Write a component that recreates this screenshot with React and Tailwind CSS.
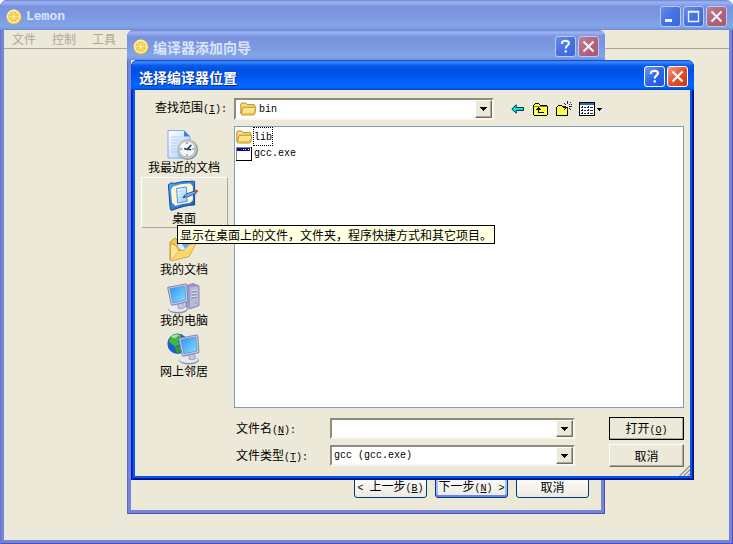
import React from 'react';

const places = [
  { name: '我最近的文档', Icon: RecentIcon },
  { name: '桌面', Icon: DesktopIcon, hot: true },
  { name: '我的文档', Icon: DocumentsIcon },
  { name: '我的电脑', Icon: ComputerIcon },
  { name: '网上邻居', Icon: NetworkIcon },
];

function Latin({ children }) {
  return <span className="font-['Liberation_Mono','Noto_Sans_CJK_SC',monospace] text-[10px]">{children}</span>;
}

function Key({ letter, colon }) {
  return (
    <Latin>
      (<u>{letter}</u>){colon ? ':' : ''}
    </Latin>
  );
}

function LemonIcon() {
  return (
    <svg width="16" height="16" viewBox="0 0 16 16" aria-hidden="true" className="shrink-0">
      <circle cx="8" cy="8" r="7.6" fill="#e3ae2c" />
      <circle cx="7.7" cy="7.6" r="7" fill="#fdf3c0" />
      <circle cx="7.7" cy="7.6" r="5.6" fill="#f2cc4c" />
      <path d="M7.7 2.4v10.4M2.5 7.6h10.4M4 3.9l7.4 7.4M11.4 3.9L4 11.3" stroke="#fbe79a" strokeWidth="0.8" />
      <circle cx="7.7" cy="7.6" r="1" fill="#fff8d8" />
    </svg>
  );
}

function CaptionButton({ kind, active }) {
  const blue = active
    ? 'bg-linear-to-br from-[#6f9bf5] via-[#2f66e8] to-[#1f56dc] border-white'
    : 'bg-linear-to-br from-[#6a8cea] via-[#4471e4] to-[#3d68dc] border-[#b9c9f3]';
  const red = active
    ? 'bg-linear-to-br from-[#f09a80] via-[#e4522a] to-[#c93a12] border-white'
    : 'bg-linear-to-br from-[#bd8096] via-[#b5647a] to-[#a95570] border-[#b9c9f3]';
  const labels = { min: 'Minimize', max: 'Maximize', help: 'Help', close: 'Close' };
  return (
    <button
      type="button"
      aria-label={labels[kind]}
      className={`grid size-[21px] place-items-center rounded-[3px] border ${kind === 'close' ? red : blue}`}
    >
      <svg width="19" height="19" viewBox="0 0 19 19" fill="none" stroke={active ? '#fff' : '#eef2fd'} strokeWidth="2">
        {kind === 'min' && <path d="M4 13.5h7" strokeWidth="3" />}
        {kind === 'max' && <path d="M4.5 4.5h10v10h-10zM4 5h11" strokeWidth="1.4" />}
        {kind === 'close' && <path d="M4.5 4.5l10 10M14.5 4.5l-10 10" strokeWidth="2.2" />}
        {kind === 'help' && (
          <path d="M6 7V6c0-1.5 1.2-2.2 3.4-2.2S13 4.7 13 6.2c0 2.2-3.3 2.4-3.3 5.3M9.7 13.2v2.3" strokeWidth="2.2" />
        )}
      </svg>
    </button>
  );
}

function TitleBar({ title, icon, active, buttons, latin }) {
  return (
    <header
      className={`flex h-[30px] shrink-0 items-center gap-[2px] rounded-t-[7px] pr-[6px] pt-[3px] ${
        icon ? 'pl-[6px]' : 'pl-[8px]'
      } ${
        active
          ? 'bg-[linear-gradient(#0831d9_0%,#3c8cf8_6%,#2a80f6_10%,#0a5ce8_18%,#0050e2_30%,#0056ee_55%,#0066ff_80%,#0062f8_92%,#0048d4_100%)]'
          : 'bg-[linear-gradient(#6f84d8_0%,#9cb6f0_7%,#8fa8ec_13%,#7a93e0_22%,#7b97e1_50%,#82a5e6_85%,#7f9fe3_93%,#7088d6_100%)]'
      }`}
    >
      {icon && <LemonIcon />}
      <h1
        className={`min-w-0 flex-1 truncate font-bold leading-5 ${icon ? 'pl-[2px]' : ''} ${
          latin ? "font-['Liberation_Mono',monospace] text-[13px]" : 'text-sm'
        } ${active ? 'text-white [text-shadow:1px_1px_#0a2a8c]' : 'text-[#dbe4fa]'}`}
      >
        {title}
      </h1>
      {buttons.map((kind) => (
        <CaptionButton key={kind} kind={kind} active={active} />
      ))}
    </header>
  );
}

const sunken = 'border-2 border-t-[#8f8c7f] border-l-[#8f8c7f] border-b-[#f8f7f1] border-r-[#f8f7f1] bg-white';
const raised =
  'border border-t-white border-l-white border-b-[#716f64] border-r-[#716f64] bg-[#ece9d8] shadow-[inset_-1px_-1px_#aca899]';

function Arrow() {
  return (
    <svg width="7" height="4" viewBox="0 0 7 4" shapeRendering="crispEdges" aria-hidden="true">
      <path d="M0 0h7v1H0zM1 1h5v1H1zM2 2h3v1H2zM3 3h1v1H3z" fill="#000" />
    </svg>
  );
}

function DropSelect({ id, value, icon, className }) {
  return (
    <div className={`grid grid-cols-[minmax(0,1fr)] ${sunken} ${className}`}>
      <div className="col-start-1 row-start-1 flex items-center">
        {icon}
        <select
          id={id}
          defaultValue={value}
          className="h-full w-full flex-1 appearance-none bg-transparent pl-[2px] pt-[1px] font-['Liberation_Mono',monospace] text-[10px] text-black outline-none"
        >
          <option>{value}</option>
        </select>
      </div>
      <span className={`pointer-events-none col-start-1 row-start-1 grid w-[17px] place-items-center justify-self-end ${raised}`}>
        <Arrow />
      </span>
    </div>
  );
}

function FolderIcon({ className }) {
  return (
    <svg width="17" height="16" viewBox="0 0 17 16" aria-hidden="true" className={`shrink-0 ${className || ''}`}>
      <path d="M.8 12.5V3.2q0-1 1-1.2h4l1.4 1.6h6.6q1 0 1 1v8z" fill="#f8dc7c" stroke="#b98a1c" />
      <path d="M1.4 13.6q.8-6 2-7.4h11.8q.8 0 .6 1l-1.2 5.6q-.4 1.2-1.4 1.2H2z" fill="#fbe690" stroke="#bd8d20" />
      <path d="M3 12.6h10.6l1.2-4" fill="none" stroke="#edbc40" strokeWidth="1.2" />
    </svg>
  );
}

function AppIcon() {
  return (
    <svg width="16" height="14" viewBox="0 0 16 14" shapeRendering="crispEdges" aria-hidden="true" className="shrink-0">
      <path d="M0 0h16v14H0z" fill="#000" />
      <path d="M0 0h15v13H0z" fill="#8a8a8a" />
      <path d="M1 1h14v12H1z" fill="#fff" />
      <path d="M1 1h13v3H1z" fill="#0a0a90" />
      <path d="M7 2h1v1H7zM9 2h1v1H9zM12 2h1v1h-1z" fill="#fff" />
    </svg>
  );
}

function RecentIcon() {
  return (
    <svg width="34" height="32" viewBox="0 0 34 32" aria-hidden="true">
      <defs>
        <linearGradient id="page" x1="0" y1="0" x2="1" y2="1">
          <stop offset="0" stopColor="#ffffff" />
          <stop offset="1" stopColor="#a9cdf6" />
        </linearGradient>
      </defs>
      <path d="M1 1.5h16l6 6V29H1z" fill="url(#page)" stroke="#86ade6" />
      <path d="M17 1.5v6h6z" fill="#3c7ee6" />
      <path d="M4 8h11M4 11h9M4 14h6M4 17h5M4 20h5M4 23h6" stroke="#b7ceef" />
      <circle cx="20.6" cy="20.7" r="10.4" fill="#7f9097" />
      <circle cx="20.1" cy="20" r="9.8" fill="#bccad2" />
      <circle cx="20.1" cy="20" r="8" fill="#eef7fd" stroke="#9fb4c2" strokeWidth="0.8" />
      <path d="M20.1 20.5l4.2-4.5M20.1 20.5l-3-1M20.1 20.5h4" stroke="#233a4a" strokeWidth="1.6" />
      <path d="M20.1 13v2M20.1 25.2v2M13 20h2M25.4 20h2" stroke="#ef7a35" strokeWidth="1.6" />
    </svg>
  );
}

function DesktopIcon() {
  return (
    <svg width="34" height="32" viewBox="0 0 34 32" aria-hidden="true">
      <defs>
        <linearGradient id="pad" x1="0" y1="0" x2="1" y2="1">
          <stop offset="0" stopColor="#5aa6f4" />
          <stop offset="1" stopColor="#1658ba" />
        </linearGradient>
        <linearGradient id="note" x1="0" y1="0" x2="1" y2="1">
          <stop offset="0" stopColor="#ffffff" />
          <stop offset="1" stopColor="#8fc4f6" />
        </linearGradient>
      </defs>
      <path d="M1.4 5Q3 2 7 3.4 15 1 26.6 1.2q1 0 1 1V25Q18 25 5.4 30.2q-2 .4-2.2-1.6z" fill="url(#pad)" stroke="#0f4c9c" />
      <path d="M6 6.4Q14 3.4 23.5 3.6l2.4 3v13.6l-3 2.8Q14 23.6 8.4 26L5 22.6 4 9.4z" fill="#fff6d2" />
      <path d="M9.6 8.4L19.4 7l.8 14.2-9.6 1.8z" fill="url(#note)" stroke="#4c94e4" />
      <path d="M11.4 11.6l6-.8M11.6 14.4l5-.6M11.8 17.4l4-.5" stroke="#b4d4f6" />
      <path d="M16 17.4l3-3.4 8.6-3 1.4 2.4-8.4 3.4z" fill="#69aef0" stroke="#22589c" strokeWidth="0.9" />
      <path d="M27.2 10.6l2.6-1.2 1.4 2-2.4 1.8z" fill="#d5412b" />
      <path d="M15.6 17.8l1.8-1.9 1 1.2z" fill="#222" />
    </svg>
  );
}

function DocumentsIcon() {
  return (
    <svg width="34" height="32" viewBox="0 0 34 32" aria-hidden="true">
      <path d="M3 11l5-4 6 4-3 16-8 2z" fill="#f2c452" stroke="#bb8a22" strokeWidth="0.8" />
      <path d="M10 7l16-3 3 9-13 7-5-3z" fill="#dceefe" stroke="#8ab4e4" strokeWidth="0.8" />
      <path d="M14 12l4 5.6 7-6.6z" fill="#62a8ee" />
      <path d="M3.4 12.4L9 14.4l3 5.4 5-.6 6.4-5.6 6-1.4-7.6 13.4-16.6 4q-1.6.2-1.8-1.6z" fill="#fde596" stroke="#c99a2e" strokeWidth="0.9" />
      <path d="M4.6 28.6L12 21l7-1 5-4.8 3.6-.8-6.4 10.6z" fill="#fbd66a" />
      <path d="M4.6 28.6L12 20" stroke="#e2a93a" strokeWidth="0.8" />
    </svg>
  );
}

function Monitor() {
  return (
    <g>
      <ellipse cx="11" cy="27.2" rx="9.8" ry="4.2" fill="#8d90b2" />
      <ellipse cx="10.6" cy="26.4" rx="9.2" ry="3.6" fill="#e8e9f4" />
      <path d="M11 20l5-1 1.6 6.4q-2.6 2.6-6.6.8z" fill="#c3c5de" stroke="#8385aa" strokeWidth="0.6" />
      <path d="M.6 5.4L18.4 2q1.2-.2 1.4 1l1.2 16.6-15.4 3.6q-1.2.2-1.4-1z" fill="#c9cbe2" stroke="#777ba4" strokeWidth="0.9" />
      <path d="M2.8 6.8L17.8 4l1 14-12.8 3z" fill="url(#screen)" stroke="#4f8fd6" strokeWidth="0.7" />
    </g>
  );
}

function ComputerIcon() {
  return (
    <svg width="34" height="32" viewBox="0 0 34 32" aria-hidden="true">
      <defs>
        <linearGradient id="screen" x1="0" y1="0" x2="1" y2="1">
          <stop offset="0" stopColor="#2b93f2" />
          <stop offset="1" stopColor="#8be0ff" />
        </linearGradient>
      </defs>
      <path d="M18 4l8-2.4L32 4v19.6l-9 3.2-4-2z" fill="#9b9bc9" stroke="#7373a6" strokeWidth="0.8" />
      <path d="M23 5.6l8.4-1.4v19l-8.4 2.8z" fill="#b9b9de" />
      <path d="M24.6 9l5-.9M24.6 12l5-.9M24.6 15l5-.9" stroke="#e3e3f4" strokeWidth="1" />
      <path d="M24.6 10.2l5-.9M24.6 13.2l5-.9M24.6 16.2l5-.9" stroke="#6f6fa5" strokeWidth="0.8" />
      <circle cx="29" cy="20.6" r="1.1" fill="#63ce4d" />
      <Monitor />
    </svg>
  );
}

function NetworkIcon() {
  return (
    <svg width="34" height="32" viewBox="0 0 34 32" aria-hidden="true">
      <circle cx="10.6" cy="10.8" r="10.2" fill="#1a5fd0" />
      <path d="M3.6 3.9Q8.6-.3 13.6 1.7l1 4-4 2.4 2 3-4 3.2-3.4-3L1.6 8.3z" fill="#42b53c" />
      <path d="M8 14.4l5-1 2 3-4 4.2q-2.6-1-3-6.2z" fill="#2e9c33" />
      <path d="M3.6 3.5q4-3 9-1.6l-5 3.6z" fill="#a5e68c" />
      <g transform="translate(11 0)">
        <Monitor />
      </g>
    </svg>
  );
}

function BackIcon() {
  return (
    <svg width="14" height="12" viewBox="0 0 14 12" aria-hidden="true">
      <path d="M.8 6l4.4-4.2v2.7h7.3v3H5.2v2.7z" fill="#00e8ec" stroke="#003040" strokeWidth="1" />
    </svg>
  );
}

function UpIcon() {
  return (
    <svg width="15" height="13" viewBox="0 0 15 13" shapeRendering="crispEdges" aria-hidden="true">
      <path d="M1 1h1V0h4v1h1v1h7v1h1v9h-1v1H1v-1H0V2h1z" fill="#000" />
      <path d="M1 3V2h1V1h4v1h1v1h7v9H1z" fill="#ffff4d" />
      <path d="M1 3h13v1H1z" fill="#8a8a20" />
      <path d="M5 4h1v1h1v1h1v1H6v2h5v1H5V7H3V6h1V5h1z" fill="#000" />
    </svg>
  );
}

function NewFolderIcon() {
  return (
    <svg width="15" height="16" viewBox="0 0 15 16" shapeRendering="crispEdges" aria-hidden="true" className="overflow-visible">
      <path d="M0 6h1V5h1V4h4v1h1v1h5v9H0z" fill="#000" />
      <path d="M1 7V6h1V5h4v1h1v1h4v7H1z" fill="#ffff4d" />
      <path d="M11 0h1v3h-1zM11 7h1v3h-1zM7 5h3v1H7zM13 5h3v1h-3zM8 2h1v1H8zM9 3h1v1H9zM14 1h1v1h-1zM13 3h1v1h-1zM15 3h1v1h-1zM13 7h1v1h-1zM14 8h1v1h-1zM9 7h1v1H9zM8 8h1v1H8z" fill="#222" />
    </svg>
  );
}

function ViewsIcon() {
  return (
    <svg width="24" height="14" viewBox="0 0 24 14" shapeRendering="crispEdges" aria-hidden="true">
      <path d="M0 0h16v14H0z" fill="#000" />
      <path d="M1 3h14v10H1z" fill="#fff" />
      <path d="M1 1h14v2H1z" fill="#2c66b8" />
      <path d="M3 4h1v2H2V5h1zM3 7h1v2H2V8h1zM3 10h1v2H2v-1h1zM9 4h1v2H8V5h1zM9 7h1v2H8V8h1zM9 10h1v2H8v-1h1z" fill="#171780" />
      <path d="M5 5h2v1H5zM5 8h2v1H5zM5 11h2v1H5zM11 5h3v1h-3zM11 8h3v1h-3zM11 11h3v1h-3z" fill="#333" />
      <path d="M18 6h5v1h-5zM19 7h3v1h-3zM20 8h1v1h-1z" fill="#000" />
    </svg>
  );
}

function WizardButton({ focused, children }) {
  return (
    <button
      type="button"
      className={`h-[23px] w-[73px] whitespace-nowrap rounded-[3px] border border-[#003c74] bg-linear-to-b from-white to-[#eceae0] ${
        focused ? 'shadow-[inset_0_-2px_#6982ee,inset_2px_0_#a3bdf2,inset_-2px_0_#a3bdf2]' : ''
      }`}
    >
      {children}
    </button>
  );
}

function OpenDialog() {
  return (
    <section className="absolute left-[131px] top-[60px] z-20 w-[563px] rounded-t-[7px] bg-[#0855e4] shadow-[inset_1px_0_#0019bf,inset_2px_0_#0831d9,inset_-1px_-1px_#00138c,inset_-2px_-2px_#001ea8]">
      <TitleBar title="选择编译器位置" active buttons={['help', 'close']} />
      <div className="relative mx-1 mb-1 bg-[#ece9d8] px-[6px] pb-[9px] pt-2">
        <div className="flex h-[22px] items-center">
          <label htmlFor="look-in" className="w-[93px] self-start whitespace-nowrap pl-[14px] leading-[18px]">
            查找范围<Key letter="I" colon />
          </label>
          <DropSelect id="look-in" value="bin" icon={<FolderIcon className="ml-1" />} className="h-[22px] w-[260px]" />
          <div className="flex items-center gap-2 pl-[17px]">
            <button type="button" aria-label="Back"><BackIcon /></button>
            <button type="button" aria-label="Up one level"><UpIcon /></button>
            <button type="button" aria-label="New folder"><NewFolderIcon /></button>
            <button type="button" aria-label="Views"><ViewsIcon /></button>
          </div>
        </div>
        <div className="mt-[6px] flex gap-[6px]">
          <nav className="flex w-[87px] shrink-0 flex-col">
            {places.map(({ name, Icon, hot }) => (
              <button
                key={name}
                type="button"
                className={`flex h-[51px] flex-col items-center whitespace-nowrap border pr-[1px] pt-[2px] leading-3 ${
                  hot ? 'border-b-[#aca899] border-l-white border-r-[#aca899] border-t-white' : 'border-transparent'
                }`}
              >
                <Icon />
                {name}
              </button>
            ))}
          </nav>
          <div className="min-w-0 flex-1">
            <ul className="h-[282px] border border-[#7f9db9] bg-white pl-[1px] pt-[1px]">
              <li className="flex h-[17px] items-center">
                <FolderIcon />
                <span className="border border-dotted border-black leading-[14px]"><Latin>lib</Latin></span>
              </li>
              <li className="flex h-[17px] items-center gap-[2px]">
                <AppIcon />
                <Latin>gcc.exe</Latin>
              </li>
            </ul>
            <div className="mt-[9px] grid grid-cols-[94px_245px_minmax(0,1fr)] items-center gap-y-1 pl-[2px]">
              <label htmlFor="file-name">文件名<Key letter="N" colon /></label>
              <div className={`flex h-[21px] ${sunken}`}>
                <input id="file-name" type="text" className="min-w-0 flex-1 bg-transparent px-[2px] outline-none" />
                <button type="button" aria-label="Show file names" className={`grid w-[17px] place-items-center ${raised}`}>
                  <Arrow />
                </button>
              </div>
              <button type="button" className={`h-[23px] w-[75px] justify-self-end outline outline-1 -outline-offset-1 outline-black ${raised}`}>
                打开<Key letter="O" />
              </button>
              <label htmlFor="file-type">文件类型<Key letter="T" colon /></label>
              <DropSelect id="file-type" value="gcc (gcc.exe)" className="h-[21px]" />
              <button type="button" className={`h-[23px] w-[75px] justify-self-end ${raised}`}>取消</button>
            </div>
          </div>
        </div>
        <svg width="12" height="12" viewBox="0 0 12 12" className="absolute bottom-0 right-0" aria-hidden="true">
          <path d="M0 12L12 0M4 12l8-8M8 12l4-4" stroke="#fff" strokeWidth="1" />
          <path d="M1.5 12L12 1.5M5.5 12L12 5.5M9.5 12L12 9.5" stroke="#9d9a8b" strokeWidth="1.6" />
        </svg>
      </div>
      <div role="tooltip" className="absolute left-[46px] top-[165px] whitespace-nowrap border border-black bg-[#ffffe1] px-[2px] leading-[17px]">
        显示在桌面上的文件，文件夹，程序快捷方式和其它项目。
      </div>
    </section>
  );
}

function Wizard() {
  return (
    <section className="absolute left-[127px] top-[30px] z-10 flex h-[484px] w-[478px] flex-col rounded-t-[7px] bg-[#7585dc] shadow-[inset_1px_0_#5f67c6,inset_-1px_-1px_#4f50b4]">
      <TitleBar title="编译器添加向导" icon buttons={['help', 'close']} />
      <div className="mx-1 mb-1 flex flex-1 items-end justify-end gap-2 bg-[#ece9d8] pb-3 pr-3">
        <WizardButton><Latin>&lt; </Latin>上一步<Key letter="B" /></WizardButton>
        <WizardButton focused>下一步<Key letter="N" /><Latin> &gt;</Latin></WizardButton>
        <WizardButton>取消</WizardButton>
      </div>
    </section>
  );
}

export default function App() {
  return (
    <main className="relative flex h-screen min-h-[544px] flex-col overflow-hidden rounded-t-[7px] bg-[#7585dc] font-['Noto_Sans_CJK_SC',sans-serif] text-xs text-black shadow-[inset_1px_0_#6672d0,inset_-1px_-1px_#4f50b4]">
      <TitleBar title="Lemon" latin icon buttons={['min', 'max', 'close']} />
      <div className="mx-1 mb-1 flex-1 bg-[#ece9d8]">
        <nav className="flex h-[19px] gap-4 border-b border-[#aca899] pl-2 leading-[18px] text-[#aca899]">
          <button type="button">文件</button>
          <button type="button">控制</button>
          <button type="button">工具</button>
        </nav>
      </div>
      <Wizard />
      <OpenDialog />
    </main>
  );
}
